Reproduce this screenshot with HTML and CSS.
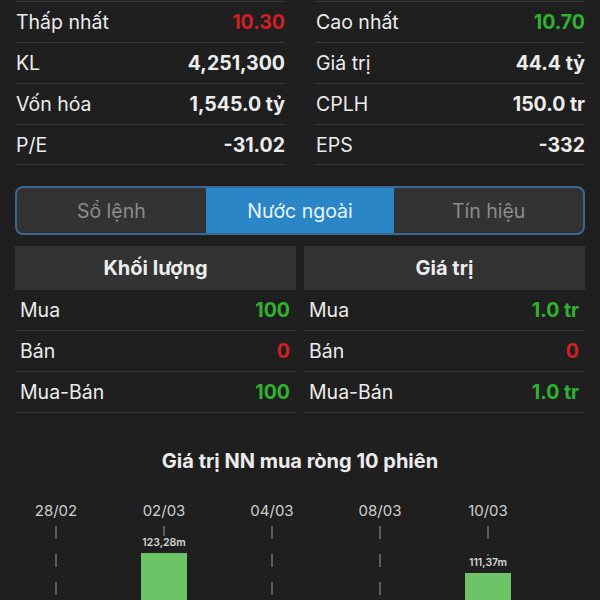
FILE: index.html
```html
<!DOCTYPE html>
<html lang="vi">
  <head>
    <meta charset="UTF-8" />
    <meta name="viewport" content="width=device-width, initial-scale=1.0" />
    <title>Chi tiết cổ phiếu</title>
    <link rel="stylesheet" href="styles.css">
  </head>
  <body>
    <!-- Stats -->
    <div class="stats">
      <div class="stat-col">
        <div class="stat-row"><span>Thấp nhất</span><b class="down">10.30</b></div>
        <div class="stat-row"><span>KL</span><b>4,251,300</b></div>
        <div class="stat-row"><span>Vốn hóa</span><b>1,545.0 tỷ</b></div>
        <div class="stat-row"><span>P/E</span><b>-31.02</b></div>
      </div>
      <div class="stat-col">
        <div class="stat-row"><span>Cao nhất</span><b class="up">10.70</b></div>
        <div class="stat-row"><span>Giá trị</span><b>44.4 tỷ</b></div>
        <div class="stat-row"><span>CPLH</span><b>150.0 tr</b></div>
        <div class="stat-row"><span>EPS</span><b>-332</b></div>
      </div>
    </div>

    <!-- Tabs -->
    <div class="tabs">
      <div class="tab">Sổ lệnh</div>
      <div class="tab active">Nước ngoài</div>
      <div class="tab">Tín hiệu</div>
    </div>

    <!-- Foreign trading -->
    <div class="foreign">
      <div class="foreign-col">
        <div class="foreign-head">Khối lượng</div>
        <div class="foreign-row"><span>Mua</span><b class="up">100</b></div>
        <div class="foreign-row"><span>Bán</span><b class="down">0</b></div>
        <div class="foreign-row"><span>Mua-Bán</span><b class="up">100</b></div>
      </div>
      <div class="foreign-col">
        <div class="foreign-head">Giá trị</div>
        <div class="foreign-row"><span>Mua</span><b class="up">1.0 tr</b></div>
        <div class="foreign-row"><span>Bán</span><b class="down">0</b></div>
        <div class="foreign-row"><span>Mua-Bán</span><b class="up">1.0 tr</b></div>
      </div>
    </div>

    <!-- Chart -->
    <div class="chart">
      <h2 class="chart-title">Giá trị NN mua ròng 10 phiên</h2>
      <div class="chart-cols">
        <div class="chart-col">
          <div class="chart-date">28/02</div>
          <div class="chart-plot"></div>
        </div>
        <div class="chart-col">
          <div class="chart-date">02/03</div>
          <div class="chart-plot">
            <div class="bar-label" style="margin-top: 10px">123,28m</div>
            <div class="bar"></div>
          </div>
        </div>
        <div class="chart-col">
          <div class="chart-date">04/03</div>
          <div class="chart-plot"></div>
        </div>
        <div class="chart-col">
          <div class="chart-date">08/03</div>
          <div class="chart-plot"></div>
        </div>
        <div class="chart-col">
          <div class="chart-date">10/03</div>
          <div class="chart-plot">
            <div class="bar-label" style="margin-top: 30px">111,37m</div>
            <div class="bar"></div>
          </div>
        </div>
      </div>
    </div>
  </body>
</html>
```

FILE: styles.css
```css
* {
  margin: 0;
  padding: 0;
  box-sizing: border-box;
}

body {
  font-family: Inter, "Noto Sans", sans-serif;
  background-color: #1f1f1f;
  color: #ececec;
  overflow: hidden;
  height: 600px;
}

.up {
  color: #2db42d;
}

.down {
  color: #d01f26;
}

/* Stats */
.stats {
  display: grid;
  grid-template-columns: 1fr 1fr;
  gap: 30px;
  padding: 1px 15px 0;
}

.stat-row {
  display: flex;
  justify-content: space-between;
  align-items: center;
  height: 41px;
  border-top: 1px solid #383838;
  font-size: 19.5px;
}

.stat-row:last-child {
  border-bottom: 1px solid #383838;
}

.stat-row span {
  padding-left: 1px;
}

.stat-row b {
  font-weight: 700;
}

/* Tabs */
.tabs {
  display: flex;
  margin: 21px 15px 0;
  height: 49px;
  border: 2px solid #3a6890;
  border-radius: 8px;
  overflow: hidden;
  background: #333;
}

.tab {
  flex: 1;
  display: flex;
  align-items: center;
  justify-content: center;
  font-size: 19.5px;
  color: #8c8c8c;
}

.tab.active {
  background: #2a86c6;
  color: #e9f4fc;
}

/* Foreign trading */
.foreign {
  display: grid;
  grid-template-columns: 1fr 1fr;
  gap: 8px;
  padding: 11px 15px 0;
}

.foreign-head {
  height: 44px;
  display: flex;
  align-items: center;
  justify-content: center;
  background: #333;
  font-size: 20px;
  font-weight: 700;
}

.foreign-row {
  display: flex;
  justify-content: space-between;
  align-items: center;
  height: 41px;
  padding: 0 6px 0 5px;
  border-bottom: 1px solid #383838;
  font-size: 19.5px;
}

.foreign-row b {
  font-weight: 700;
}

/* Chart */
.chart {
  padding-top: 35px;
}

.chart-title {
  text-align: center;
  font-size: 20px;
  font-weight: 700;
  line-height: 26px;
}

.chart-cols {
  display: flex;
  padding: 27px 0 0 2px;
}

.chart-col {
  width: 108px;
  display: flex;
  flex-direction: column;
  align-items: center;
}

.chart-date {
  font-size: 15px;
  line-height: 20px;
  color: #cfcfcf;
}

.chart-plot {
  width: 100%;
  height: 120px;
  margin-top: 5px;
  display: flex;
  flex-direction: column;
  align-items: center;
  background-image: repeating-linear-gradient(
    to bottom,
    #5c5c5c 0 13px,
    transparent 13px 28px
  );
  background-size: 2px 100%;
  background-repeat: no-repeat;
  background-position: center top;
}

.bar-label {
  font-size: 10.5px;
  font-weight: 600;
  line-height: 13px;
  color: #d6d6d6;
  background: #1f1f1f;
  padding: 0 2px;
}

.bar {
  width: 46px;
  height: 80px;
  margin-top: 4px;
  background: #6cc466;
}
```
